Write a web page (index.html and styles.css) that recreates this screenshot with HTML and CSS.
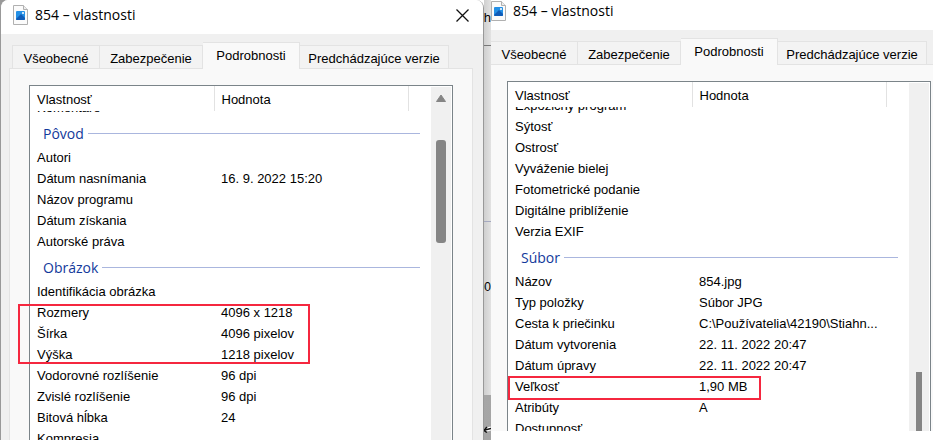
FILE: index.html
```html
<!DOCTYPE html>
<html lang="sk">
<head>
    <meta charset="utf-8">
    <title>854 – vlastnosti</title>
    <link rel="stylesheet" href="styles.css">
</head>
<body>
    <div class="desktop">
        <section class="window window-left">
            <header class="titlebar">
                <svg class="file-icon" width="16" height="20" viewBox="0 0 16 20">
                    <path d="M.5.5h10l4 4v15H.5z" fill="#fbfbfb" stroke="#b0b0b0"/>
                    <path d="M10.5.5v4h4" fill="#eee" stroke="#b0b0b0"/>
                    <rect x="3" y="6" width="9" height="9" rx="1" fill="#2490e6"/>
                    <path d="M3 14l5-5 4 4v1a1 1 0 0 1-1 1H4a1 1 0 0 1-1-1z" fill="#0f5cb8"/>
                    <circle cx="10" cy="8" r="1" fill="#fff"/>
                </svg>
                <h1>854 – vlastnosti</h1>
                <button class="close" type="button" aria-label="Zavrieť">
                    <svg width="13" height="13" viewBox="0 0 13 13"><path d="M.5.5l12 12M12.5.5l-12 12" stroke="#111" stroke-width="1.3"/></svg>
                </button>
            </header>
            <nav class="tabs">
                <button class="tab general" type="button">Všeobecné</button>
                <button class="tab security" type="button">Zabezpečenie</button>
                <button class="tab details active" type="button">Podrobnosti</button>
                <button class="tab versions" type="button">Predchádzajúce verzie</button>
            </nav>
            <div class="panel">
                <div class="list">
                    <table>
                        <thead>
                            <tr><th class="name">Vlastnosť</th><th class="value">Hodnota</th><th></th></tr>
                        </thead>
                        <tbody>
                            <tr class="cut"><td colspan="3"><div><span>Komentáre</span></div></td></tr>
                            <tr class="group"><th colspan="3"><div>Pôvod</div></th></tr>
                            <tr><td>Autori</td><td></td><td></td></tr>
                            <tr><td>Dátum nasnímania</td><td>16. 9. 2022 15:20</td><td></td></tr>
                            <tr><td>Názov programu</td><td></td><td></td></tr>
                            <tr><td>Dátum získania</td><td></td><td></td></tr>
                            <tr><td>Autorské práva</td><td></td><td></td></tr>
                            <tr class="group"><th colspan="3"><div>Obrázok</div></th></tr>
                            <tr><td>Identifikácia obrázka</td><td></td><td></td></tr>
                            <tr><td>Rozmery</td><td>4096 x 1218</td><td></td></tr>
                            <tr><td>Šírka</td><td>4096 pixelov</td><td></td></tr>
                            <tr><td>Výška</td><td>1218 pixelov</td><td></td></tr>
                            <tr><td>Vodorovné rozlíšenie</td><td>96 dpi</td><td></td></tr>
                            <tr><td>Zvislé rozlíšenie</td><td>96 dpi</td><td></td></tr>
                            <tr><td>Bitová hĺbka</td><td>24</td><td></td></tr>
                            <tr><td>Kompresia</td><td></td><td></td></tr>
                        </tbody>
                    </table>
                    <div class="scrollbar">
                        <svg class="arrow" width="12" height="9" viewBox="0 0 12 9"><path d="M6 1l4.5 6.5h-9z" fill="#858585" stroke="#858585" stroke-linejoin="round"/></svg>
                        <div class="thumb"></div>
                    </div>
                    <div class="mark mark-size"></div>
                </div>
            </div>
        </section>

        <div class="behind">
            <span class="piece-h">h</span>
            <span class="piece-num">00</span>
            <svg class="piece-arrow" width="8" height="10" viewBox="0 0 8 10"><path d="M0 5.500l8-2" stroke="#fff" stroke-width="4"/><path d="M0 5.500l8-2M1 5l3-3M1 5.500l3 2" fill="none" stroke="#111" stroke-width="1.5"/></svg>
        </div>

        <section class="window window-right">
            <header class="titlebar">
                <svg class="file-icon" width="16" height="20" viewBox="0 0 16 20">
                    <path d="M.5.5h10l4 4v15H.5z" fill="#fbfbfb" stroke="#b0b0b0"/>
                    <path d="M10.5.5v4h4" fill="#eee" stroke="#b0b0b0"/>
                    <rect x="3" y="6" width="9" height="9" rx="1" fill="#2490e6"/>
                    <path d="M3 14l5-5 4 4v1a1 1 0 0 1-1 1H4a1 1 0 0 1-1-1z" fill="#0f5cb8"/>
                    <circle cx="10" cy="8" r="1" fill="#fff"/>
                </svg>
                <h1>854 – vlastnosti</h1>
            </header>
            <nav class="tabs">
                <button class="tab general" type="button">Všeobecné</button>
                <button class="tab security" type="button">Zabezpečenie</button>
                <button class="tab details active" type="button">Podrobnosti</button>
                <button class="tab versions" type="button">Predchádzajúce verzie</button>
            </nav>
            <div class="panel">
                <div class="list">
                    <table>
                        <thead>
                            <tr><th class="name">Vlastnosť</th><th class="value">Hodnota</th><th></th></tr>
                        </thead>
                        <tbody>
                            <tr class="cut"><td colspan="3"><div><span>Expozičný program</span></div></td></tr>
                            <tr><td>Sýtosť</td><td></td><td></td></tr>
                            <tr><td>Ostrosť</td><td></td><td></td></tr>
                            <tr><td>Vyváženie bielej</td><td></td><td></td></tr>
                            <tr><td>Fotometrické podanie</td><td></td><td></td></tr>
                            <tr><td>Digitálne priblíženie</td><td></td><td></td></tr>
                            <tr><td>Verzia EXIF</td><td></td><td></td></tr>
                            <tr class="group"><th colspan="3"><div>Súbor</div></th></tr>
                            <tr><td>Názov</td><td>854.jpg</td><td></td></tr>
                            <tr><td>Typ položky</td><td>Súbor JPG</td><td></td></tr>
                            <tr><td>Cesta k priečinku</td><td>C:\Používatelia\42190\Stiahn...</td><td></td></tr>
                            <tr><td>Dátum vytvorenia</td><td>22. 11. 2022 20:47</td><td></td></tr>
                            <tr><td>Dátum úpravy</td><td>22. 11. 2022 20:47</td><td></td></tr>
                            <tr><td>Veľkosť</td><td>1,90 MB</td><td></td></tr>
                            <tr><td>Atribúty</td><td>A</td><td></td></tr>
                            <tr><td>Dostupnosť</td><td></td><td></td></tr>
                        </tbody>
                    </table>
                    <div class="scrollbar">
                        <div class="thumb"></div>
                    </div>
                    <div class="mark mark-file"></div>
                </div>
            </div>
        </section>
    </div>
</body>
</html>
```

FILE: styles.css
```css
* {
    box-sizing: border-box;
}

body {
    margin: 0;
    background: #fff;
    color: #000;
    font-family: "Liberation Sans", Arial, sans-serif;
    font-size: 13px;
}

.desktop {
    display: grid;
    grid-template-columns: 484fr 7px 442fr;
    height: 100vh;
    overflow: hidden;
    background: linear-gradient(90deg, #999 50%, #fff 50%);
}

.window {
    display: flex;
    flex-direction: column;
    min-width: 0;
    overflow: hidden;
    background: #f0f0f0;
}

.window-left {
    border: 1px solid #999;
    border-width: 0 1px;
    border-radius: 8px 8px 0 0;
}

.window-right {
    height: calc(100vh - 9px);
}

.titlebar {
    display: flex;
    flex: none;
    align-items: center;
    height: 34px;
    padding: 0 14px 4px 12px;
    background: #fff;
}

.window-right .titlebar {
    height: 30px;
    padding: 0 0 8px;
}

.titlebar h1 {
    flex: 1;
    margin: 0 0 0 6px;
    font-family: "Open Sans", "Noto Sans", sans-serif;
    font-size: 14px;
    font-weight: normal;
    line-height: 20px;
}

.close {
    display: flex;
    padding: 0;
    border: 0;
    background: none;
}

.tabs {
    display: flex;
    flex: none;
    align-items: flex-end;
    height: 35px;
    padding-left: 11px;
    margin-bottom: -1px;
    z-index: 1;
}

.window-right .tabs {
    padding-left: 0;
}

.tab {
    height: 24px;
    padding: 2px 0 0;
    border: 1px solid #e3e3e3;
    border-left: 0;
    background: #f3f3f3;
    color: #000;
    font: inherit;
    white-space: nowrap;
}

.general {
    width: 88px;
    border-left: 1px solid #e3e3e3;
}

.window-right .general {
    width: 87px;
    border-left: 0;
}

.security {
    width: 103px;
}

.details {
    width: 97px;
}

.versions {
    width: 149px;
}

.tab.active {
    height: 27px;
    padding: 0 0 2px;
    border-bottom: 0;
    background: #f9f9f9;
}

.panel {
    display: flex;
    flex: 1;
    min-height: 0;
    margin: 0 10px 0 8px;
    padding: 16px 19px 0;
    border: 1px solid #e3e3e3;
    border-bottom: 0;
    background: #f9f9f9;
}

.window-right .panel {
    margin: 0;
    padding: 16px 2px 0 16px;
    border-width: 1px 0 0;
}

.list {
    position: relative;
    display: flex;
    flex: 1;
    align-items: flex-start;
    min-width: 0;
    border: 1px solid #7b8489;
    border-bottom: 0;
    background: #fff;
}

table {
    flex: 1;
    table-layout: fixed;
    width: 100%;
    border-collapse: collapse;
}

th,
td {
    height: 21px;
    padding: 0 0 0 7px;
    font-weight: normal;
    line-height: 21px;
    text-align: left;
    white-space: nowrap;
}

thead th {
    height: 25px;
    padding-top: 2px;
    line-height: 23px;
    border-right: 1px solid #e2e2e2;
}

thead th:last-child {
    border-right: 0;
}

.name {
    width: 184px;
}

.value {
    width: 194px;
}

/* first row is scrolled half under the header */
.cut td {
    height: 7px;
}

.cut div {
    display: flex;
    align-items: flex-end;
    height: 7px;
    overflow: hidden;
}

.window-right .cut td,
.window-right .cut div {
    height: 9px;
}

.group th {
    height: 29px;
    padding: 2px 11px 0 13px;
    line-height: 27px;
}

.group div {
    display: flex;
    align-items: center;
    color: #12399b;
    font-family: "Open Sans", "Noto Sans", sans-serif;
    font-size: 14px;
}

.group div::after {
    content: "";
    flex: 1;
    height: 1px;
    margin-left: 4px;
    background: #aab6de;
}

.scrollbar {
    flex: none;
    align-self: stretch;
    width: 20px;
    margin: 1px 1px 0 0;
    background: #f0f0f0;
}

.arrow {
    display: block;
    margin: 7px auto 0 4px;
}

.thumb {
    width: 10px;
    height: 103px;
    margin: 37px 0 0 5px;
    border-radius: 3px;
    background: #858585;
}

.window-right .thumb {
    width: 6px;
    height: 80px;
    margin: 289px 0 0 7px;
    border-radius: 0;
}

/* red frames drawn over the rows */
.mark {
    position: absolute;
    border: 2px solid #f5273f;
}

.mark-size {
    top: 218px;
    left: -12px;
    width: 292px;
    height: 60px;
}

.mark-file {
    top: 294px;
    left: 0;
    width: 253px;
    height: 24px;
}

.behind {
    position: relative;
    overflow: hidden;
    background:
        linear-gradient(#777, #777) 0 45px / 100% 1px no-repeat,
        linear-gradient(#a5a9c0, #a5a9c0) 0 221px / 100% 1px no-repeat,
        linear-gradient(#a6a6a6, #999) 0 395px / 100% 100% no-repeat,
        linear-gradient(90deg, #cfcfcf, #e2e2e2);
}

.piece-h,
.piece-num,
.piece-arrow {
    position: absolute;
    right: 0;
}

.piece-h {
    top: 10px;
}

.piece-num {
    top: 280px;
    font-size: 12px;
}

.piece-arrow {
    top: 425px;
}
```
